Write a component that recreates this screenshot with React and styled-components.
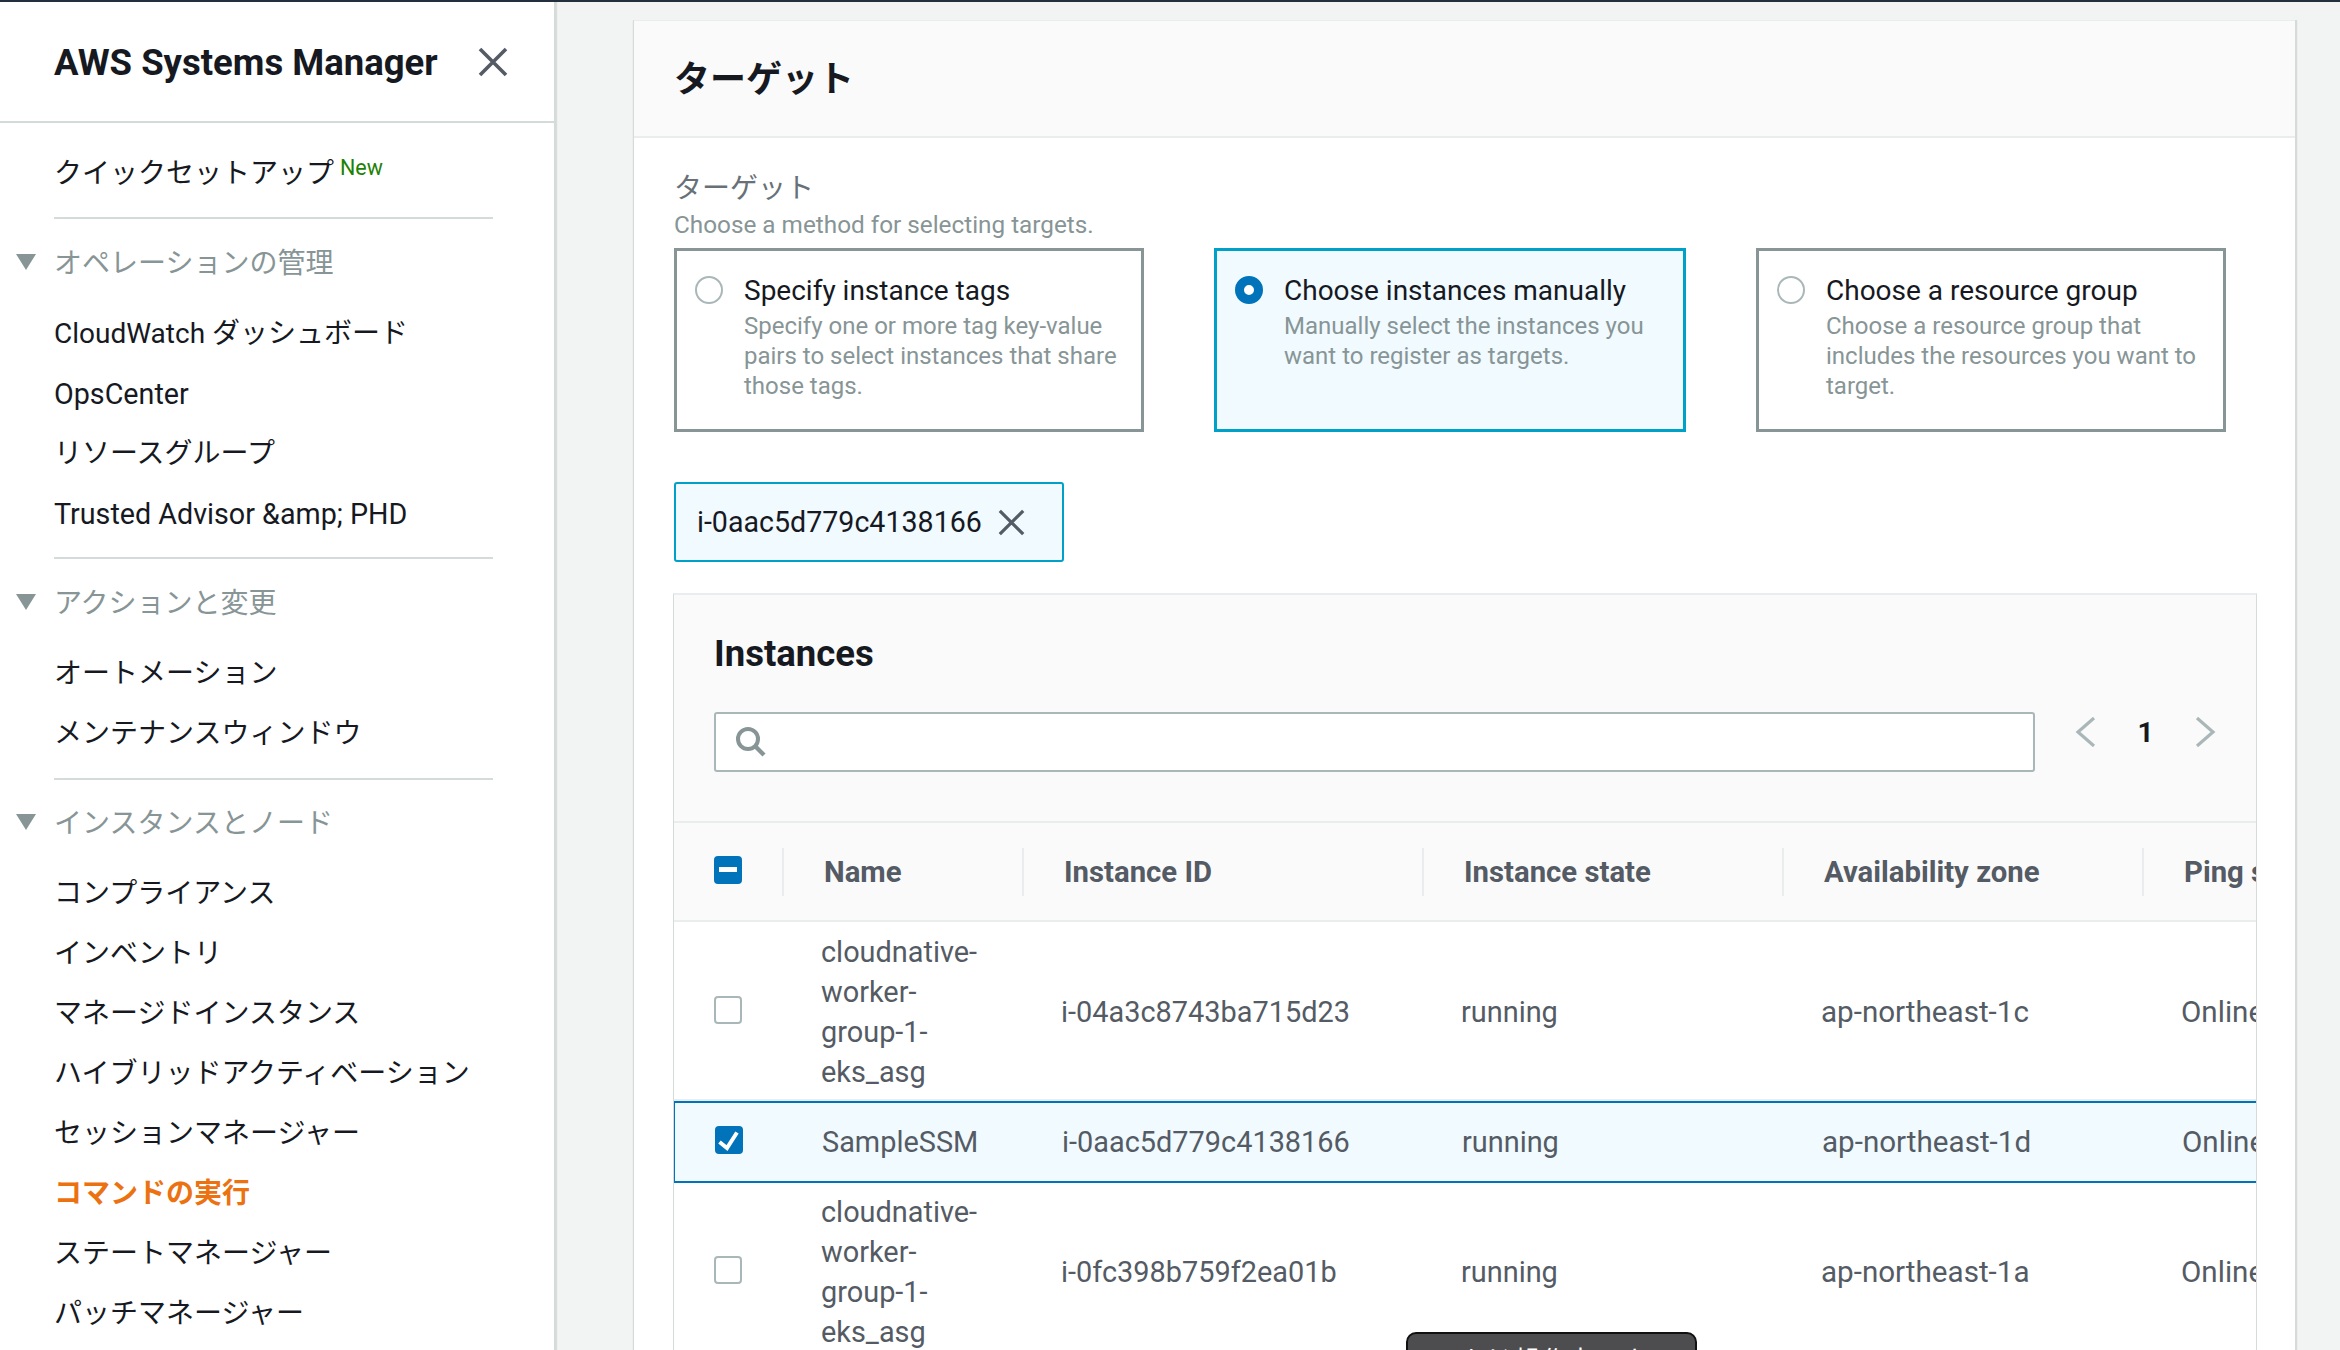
import React from "react";
import styled, { createGlobalStyle } from "styled-components";

const Global = createGlobalStyle`
  html, body { margin: 0; padding: 0; height: 1350px; overflow: hidden; background: #f2f3f3; }
  body { font-family: Roboto, "Noto Sans CJK JP", sans-serif; color: #16191f; }
  * { box-sizing: border-box; }
`;

const Page = styled.div`
  width: 2340px; height: 1350px; position: relative; overflow: hidden;
  border-top: 2px solid #232f3e;
  display: flex; align-items: stretch; background: #f2f3f3;
`;
const Side = styled.aside`
  width: 556px; flex: none; background: #fff; border-right: 2px solid #d5dbdb;
  box-shadow: 1px 0 1px rgba(0,28,36,.1); overflow: hidden;
`;
const SideHead = styled.div`
  height: 121px; padding: 0 46px 0 54px; border-bottom: 2px solid #d5dbdb;
  display: flex; align-items: center; justify-content: space-between;
`;
const SideTitle = styled.h2`
  margin: 2px 0 0; font-size: 36.5px; font-weight: 700; color: #16191f;
`;
const Nav = styled.nav`
  padding-top: 21px;
`;
const Item = styled.div`
  height: 60px; line-height: 60px; padding-left: 54px; white-space: nowrap;
  font-size: ${p => (p.$latin ? "28.7px" : "28px")};
  color: ${p => (p.$active ? "#ec7211" : "#16191f")};
  font-weight: ${p => (p.$active ? 700 : 400)};
`;
const NewTag = styled.sup`
  color: #1d8102; font-size: 21.5px; margin-left: 6px; vertical-align: 8px; line-height: 1;
`;
const Rule = styled.hr`
  margin: ${p => p.$t}px 61px ${p => p.$b}px 54px; border: 0; border-top: 2px solid #d5dbdb;
`;
const Group = styled.div`
  height: 60px; display: flex; align-items: center; color: #879596; font-size: 28px; position: relative;
  padding-left: 54px; margin-bottom: 13px;
`;
const Caret = styled.span`
  position: absolute; left: 16px; top: 23px; width: 0; height: 0;
  border-left: 10px solid transparent; border-right: 10px solid transparent; border-top: 16px solid #879596;
`;
const Main = styled.main`
  flex: 1; padding: 18px 43px 0 77px; min-width: 0;
`;
const Panel = styled.section`
  background: #fff; height: 1400px; border-left: 1px solid #d5dbdb; border-right: 2px solid #d5dbdb;
  box-shadow: 0 1px 1px rgba(0,28,36,.15);
`;
const PanelHead = styled.header`
  height: 118px; background: #fafafa; border-bottom: 2px solid #eaeded; border-top: 1px solid #eaeded;
  padding: 0 40px; display: flex; align-items: center;
`;
const PanelTitle = styled.h2`
  margin: -6px 0 0; font-size: 36px; font-weight: 700;
`;
const PanelBody = styled.div`
  padding: 33px 39px 0 40px;
`;
const FieldLabel = styled.div`
  font-size: 28px; line-height: 36px; color: #687078;
`;
const FieldHint = styled.div`
  font-size: 24.3px; line-height: 35px; color: #879596;
`;
const Tiles = styled.div`
  display: grid; grid-template-columns: 470px 472px 470px; gap: 70px; margin-top: 6px; width: 1552px;
`;
const Tile = styled.div`
  height: 184px; border: 3px solid ${p => (p.$on ? "#00a1c9" : "#879596")};
  background: ${p => (p.$on ? "#f1faff" : "#fff")};
  padding: 25px 18px 0 18px; display: grid; grid-template-columns: 28px 1fr; column-gap: 21px;
`;
const Radio = styled.span`
  width: 28px; height: 28px; border-radius: 50%;
  border: ${p => (p.$on ? "9px solid #0073bb" : "2px solid #aab7b8")};
  background: #fff;
`;
const TileTitle = styled.div`
  font-size: 28px; line-height: 30px; color: #16191f;
`;
const TileDesc = styled.div`
  font-size: 24px; line-height: 30px; color: #879596; margin-top: 5px;
`;
const Token = styled.div`
  margin-top: 50px; width: 390px; height: 80px; border: 2px solid #00a1c9; border-radius: 3px; background: #f1faff;
  display: flex; align-items: center; padding: 0 0 0 21px; gap: 16px; font-size: 28.6px; color: #16191f;
`;
const Card = styled.div`
  margin-top: 31px; margin-left: -1px; border: 1px solid #d5dbdb; border-top: 2px solid #eaeded; border-bottom: 0;
  width: 1584px; height: 800px; overflow: hidden; background: #fff;
`;
const CardHead = styled.div`
  height: 228px; background: #fafafa; padding: 37px 40px 0 40px; border-bottom: 2px solid #eaeded;
`;
const CardTitle = styled.h3`
  margin: 0; font-size: 36.5px; line-height: 44px; font-weight: 700;
`;
const ToolRow = styled.div`
  margin-top: 36px; display: flex; align-items: flex-start;
`;
const SearchBox = styled.div`
  width: 1322px; height: 60px; background: #fff; border: 2px solid #aab7b8; border-radius: 3px;
  display: flex; align-items: center; padding-left: 20px; color: #879596;
`;
const Pager = styled.div`
  margin-left: 40px; height: 40px; width: 141px; display: flex; align-items: center; justify-content: space-between;
  color: #aab7b8;
`;
const PageNo = styled.span`
  font-size: 28px; font-weight: 700; color: #16191f;
`;
const GridRow = styled.div`
  display: grid; grid-template-columns: 108px 240px 400px 360px 360px 200px; align-items: center;
  min-height: ${p => p.$h}px;
  padding-bottom: ${p => (p.$on ? "2px" : "0")};
  background: ${p => (p.$on ? "#f1faff" : p.$head ? "#fafafa" : "#fff")};
  border-bottom: 2px solid ${p => (p.$on ? "#0073bb" : "#eaeded")};
  border-top: ${p => (p.$on ? "2px solid #0073bb" : "0")};
  border-left: ${p => (p.$on ? "2px solid #0073bb" : "0")};
  margin-left: ${p => (p.$on ? "-1px" : "0")};
  width: 1690px;
`;
const HeadCell = styled.div`
  height: 48px; padding-left: 40px; border-left: 2px solid #eaeded; display: flex; align-items: center;
  font-size: 29.3px; font-weight: 700; color: #545b64; white-space: nowrap;
`;
const BoxCell = styled.div`
  padding-left: 40px; display: flex; align-items: center;
`;
const Cell = styled.div`
  padding-left: 39px; padding-top: 2px; font-size: ${p => (p.$wide ? "29.6px" : "28.9px")}; line-height: 40px; color: #545b64; white-space: nowrap;
`;
const NameCell = styled.div`
  padding-left: 39px; padding-top: 2px; font-size: 28.9px; line-height: 40px; color: #545b64; width: 212px;
`;
const Check = styled.span`
  width: 28px; height: 28px; border-radius: 4px; display: flex; align-items: center; justify-content: center;
  background: ${p => (p.$on ? "#0073bb" : "#fff")};
  border: ${p => (p.$on ? "0" : "2px solid #aab7b8")};
  margin-top: ${p => p.$mt || -2}px;
`;
const Floating = styled.div`
  position: absolute; left: 1406px; top: 1330px; width: 291px; height: 40px; background: #4d4d4f;
  border: 2px solid #111; border-radius: 10px; color: #fff; font-size: 26px; text-align: center; padding-top: 6px;
  font-family: "Noto Sans CJK JP", sans-serif;
`;

const CloseIcon = ({ size = 30, color = "#545b64", w = 3.6 }) => (
  <svg width={size} height={size} viewBox="0 0 30 30" fill="none" stroke={color} strokeWidth={w}>
    <path d="M2 2 L28 28 M28 2 L2 28" />
  </svg>
);
const SearchIcon = () => (
  <svg width="30" height="30" viewBox="0 0 30 30" fill="none" stroke="#879596" strokeWidth="4">
    <circle cx="12" cy="12" r="10" />
    <path d="M19 19 L28 28" strokeWidth="4.4" />
  </svg>
);
const Chevron = ({ right }) => (
  <svg width="22" height="30" viewBox="0 0 22 30" fill="none" stroke="#aab7b8" strokeWidth="3.2">
    <path d={right ? "M3 1 L19 15 L3 29" : "M19 1 L3 15 L19 29"} />
  </svg>
);
const Tick = () => (
  <svg width="28" height="28" viewBox="0 0 28 28" fill="none" stroke="#fff" strokeWidth="4">
    <path d="M4.5 16 L12 22 L22 6.5" />
  </svg>
);
const Dash = () => (
  <svg width="18" height="6" viewBox="0 0 18 6"><rect width="18" height="5" fill="#fff" /></svg>
);

const tiles = [
  ["Specify instance tags", "Specify one or more tag key-value pairs to select instances that share those tags."],
  ["Choose instances manually", "Manually select the instances you want to register as targets.", true],
  ["Choose a resource group", "Choose a resource group that includes the resources you want to target."],
];
const rows = [
  { name: "cloudnative-worker-group-1-eks_asg", id: "i-04a3c8743ba715d23", az: "ap-northeast-1c", h: 179 },
  { name: "SampleSSM", id: "i-0aac5d779c4138166", az: "ap-northeast-1d", h: 82, on: true },
  { name: "cloudnative-worker-group-1-eks_asg", id: "i-0fc398b759f2ea01b", az: "ap-northeast-1a", h: 178 },
];

export default function App() {
  return (
    <Page>
      <Global />
      <Side>
        <SideHead>
          <SideTitle>AWS Systems Manager</SideTitle>
          <CloseIcon />
        </SideHead>
        <Nav>
          <Item>クイックセットアップ<NewTag>New</NewTag></Item>
          <Rule $t={13} $b={12} />
          <Group><Caret />オペレーションの管理</Group>
          <Item>CloudWatch ダッシュボード</Item>
          <Item $latin>OpsCenter</Item>
          <Item>リソースグループ</Item>
          <Item $latin>Trusted Advisor &amp;amp; PHD</Item>
          <Rule $t={13} $b={12} />
          <Group><Caret />アクションと変更</Group>
          <Item>オートメーション</Item>
          <Item>メンテナンスウィンドウ</Item>
          <Rule $t={14} $b={11} />
          <Group><Caret />インスタンスとノード</Group>
          <Item>コンプライアンス</Item>
          <Item>インベントリ</Item>
          <Item>マネージドインスタンス</Item>
          <Item>ハイブリッドアクティベーション</Item>
          <Item>セッションマネージャー</Item>
          <Item $active>コマンドの実行</Item>
          <Item>ステートマネージャー</Item>
          <Item>パッチマネージャー</Item>
        </Nav>
      </Side>
      <Main>
        <Panel>
          <PanelHead><PanelTitle>ターゲット</PanelTitle></PanelHead>
          <PanelBody>
            <FieldLabel>ターゲット</FieldLabel>
            <FieldHint>Choose a method for selecting targets.</FieldHint>
            <Tiles>
              {tiles.map(([t, d, on]) => (
                <Tile key={t} $on={on}>
                  <Radio $on={on} />
                  <div>
                    <TileTitle>{t}</TileTitle>
                    <TileDesc>{d}</TileDesc>
                  </div>
                </Tile>
              ))}
            </Tiles>
            <Token>i-0aac5d779c4138166 <CloseIcon size={27} /></Token>
            <Card>
              <CardHead>
                <CardTitle>Instances</CardTitle>
                <ToolRow>
                  <SearchBox><SearchIcon /></SearchBox>
                  <Pager><Chevron /><PageNo>1</PageNo><Chevron right /></Pager>
                </ToolRow>
              </CardHead>
              <GridRow $head $h={99}>
                <BoxCell><Check $on $mt={-4}><Dash /></Check></BoxCell>
                <HeadCell>Name</HeadCell>
                <HeadCell>Instance ID</HeadCell>
                <HeadCell>Instance state</HeadCell>
                <HeadCell>Availability zone</HeadCell>
                <HeadCell>Ping status</HeadCell>
              </GridRow>
              {rows.map(r => (
                <GridRow key={r.id} $h={r.h} $on={r.on}>
                  <BoxCell><Check $on={r.on}>{r.on && <Tick />}</Check></BoxCell>
                  <NameCell>{r.name}</NameCell>
                  <Cell>{r.id}</Cell>
                  <Cell>running</Cell>
                  <Cell $wide>{r.az}</Cell>
                  <Cell $wide>Online</Cell>
                </GridRow>
              ))}
            </Card>
          </PanelBody>
        </Panel>
      </Main>
      <Floating>まだ 操作中です</Floating>
    </Page>
  );
}
